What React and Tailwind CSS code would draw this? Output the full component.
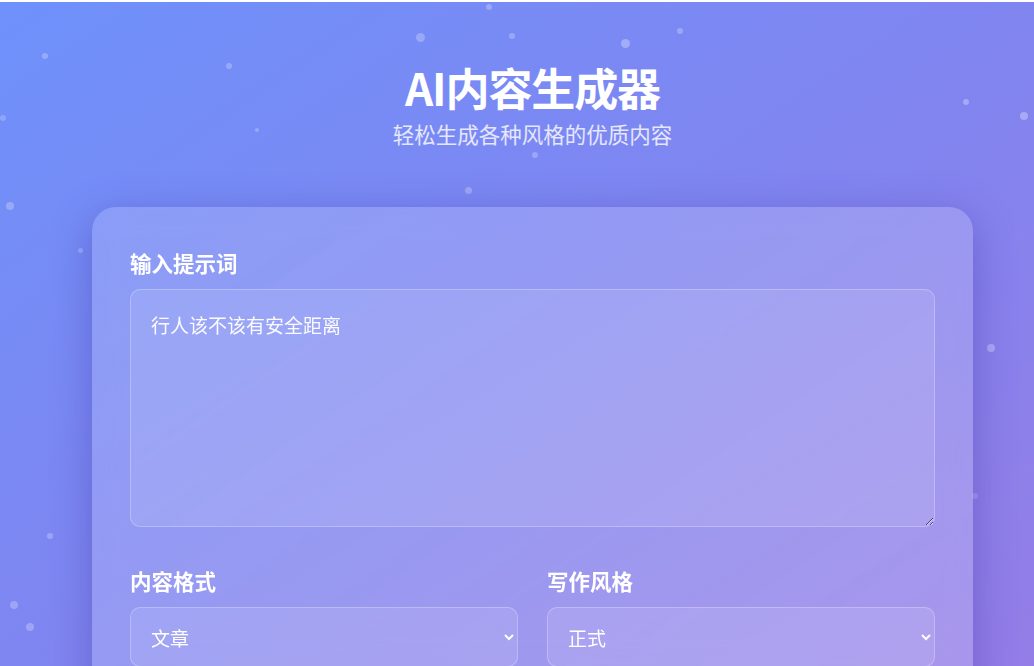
import React, { useState } from "react";

// background sparkles (left, top, size, opacity)
const dots = [
  [489, 7, 6, 0.25],
  [420, 37, 9, 0.25],
  [512, 36, 6, 0.25],
  [625, 43, 9, 0.3],
  [680, 31, 6, 0.25],
  [45, 56, 6, 0.25],
  [229, 66, 6, 0.25],
  [3, 118, 6, 0.2],
  [966, 102, 6, 0.3],
  [1024, 116, 8, 0.3],
  [257, 130, 4, 0.25],
  [535, 155, 6, 0.25],
  [468, 190, 7, 0.25],
  [10, 206, 8, 0.25],
  [80, 250, 5, 0.25],
  [991, 348, 8, 0.3],
  [975, 496, 6, 0.2],
  [50, 536, 6, 0.25],
  [14, 605, 8, 0.25],
  [30, 627, 8, 0.25],
];

export default function App() {
  // STATE ==============================
  const [prompt, setPrompt] = useState("行人该不该有安全距离");
  const [format, setFormat] = useState("article");
  const [style, setStyle] = useState("formal");

  const formatOptions = [
    { id: "article", name: "文章" },
    { id: "poem", name: "诗歌" },
    { id: "story", name: "故事" },
  ];
  const styleOptions = [
    { id: "formal", name: "正式" },
    { id: "casual", name: "轻松" },
    { id: "humor", name: "幽默" },
  ];

  return (
    <div
      className="relative min-h-screen overflow-hidden bg-gradient-to-br from-[#6e91fb] via-[#8085f0] to-[#957ce6] text-white"
      style={{ fontFamily: '"Noto Sans CJK SC", "Noto Sans", sans-serif' }}
    >
      {/* top white strip */}
      <div className="h-[2px] bg-white" />

      {/* sparkles */}
      {dots.map(([x, y, s, o], i) => (
        <span
          key={i}
          className="absolute rounded-full bg-white"
          style={{ left: x - s / 2, top: y - s / 2, width: s, height: s, opacity: o }}
        />
      ))}

      <div className="relative ml-[92px] w-[881px]">
        {/* Heading */}
        <div className="pt-[58px] text-center">
          <h1 className="text-[44px] font-bold leading-[54px] tracking-tight">AI内容生成器</h1>
          <p className="mt-[5px] text-[21.5px] leading-[30px] text-white/80">轻松生成各种风格的优质内容</p>
        </div>

        {/* CARD */}
        <div className="mt-[58px] rounded-[24px] bg-gradient-to-br from-white/15 to-white/20 px-[38px] pt-[41px] pb-10 shadow-[0_10px_40px_rgba(60,50,160,0.4)] backdrop-blur-md">
          {/* prompt */}
          <label className="mb-[11px] block text-[21.5px] font-semibold leading-[30px]">输入提示词</label>
          <textarea
            value={prompt}
            onChange={(e) => setPrompt(e.target.value)}
            className="block h-[238px] w-full rounded-[10px] border border-white/25 bg-white/10 p-5 text-[19px] leading-[30px] text-white/95 outline-none"
          />

          {/* GRID: TWO COLS */}
          <div className="mt-[39px] grid grid-cols-2 gap-[29px]">
            <div>
              <label className="mb-[11px] block text-[21.5px] font-semibold leading-[30px]">内容格式</label>
              <select
                value={format}
                onChange={(e) => setFormat(e.target.value)}
                className="block h-[60px] w-full rounded-[10px] border border-white/25 bg-white/10 px-4 text-[19px] text-white outline-none"
              >
                {formatOptions.map((o) => (
                  <option key={o.id} value={o.id} className="text-black">
                    {o.name}
                  </option>
                ))}
              </select>
            </div>
            <div>
              <label className="mb-[11px] block text-[21.5px] font-semibold leading-[30px]">写作风格</label>
              <select
                value={style}
                onChange={(e) => setStyle(e.target.value)}
                className="block h-[60px] w-full rounded-[10px] border border-white/25 bg-white/10 px-4 text-[19px] text-white outline-none"
              >
                {styleOptions.map((o) => (
                  <option key={o.id} value={o.id} className="text-black">
                    {o.name}
                  </option>
                ))}
              </select>
            </div>
          </div>
        </div>
      </div>
    </div>
  );
}
